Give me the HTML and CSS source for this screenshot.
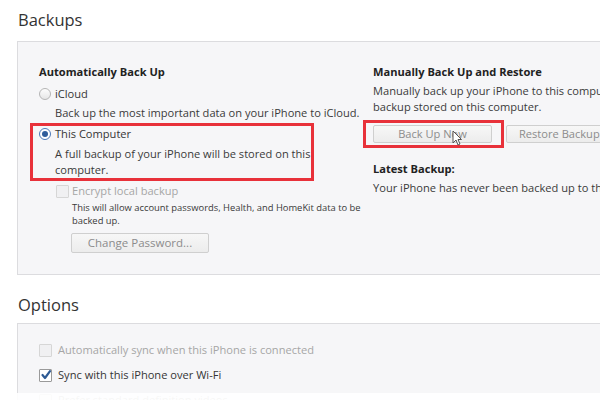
FILE: index.html
```html
<!DOCTYPE html>
<html>
<head>
<meta charset="utf-8">
<link rel="stylesheet" href="styles.css">
</head>
<body>
<div class="page">
  <h2 class="heading">Backups</h2>
  <div class="panel backups">
    <div class="col left">
      <div class="title">Automatically Back Up</div>
      <div class="opt">
        <span class="radio"></span><span>iCloud</span>
      </div>
      <div class="desc indent">Back up the most important data on your iPhone to iCloud.</div>
      <div class="redbox computer">
        <div class="opt">
          <span class="radio on"></span><span>This Computer</span>
        </div>
        <div class="desc indent">A full backup of your iPhone will be stored on this<br>computer.</div>
      </div>
      <div class="encrypt">
        <div class="opt disabled">
          <span class="check"></span><span>Encrypt local backup</span>
        </div>
        <div class="encrypt-body">
          <div class="small">This will allow account passwords, Health, and HomeKit data to be<br>backed up.</div>
          <div class="btn pw">Change Password...</div>
        </div>
      </div>
    </div>
    <div class="col right">
      <div class="title">Manually Back Up and Restore</div>
      <div class="desc">Manually back up your iPhone to this computer or restore a<br>backup stored on this computer.</div>
      <div class="btnrow">
        <div class="redbox now">
          <div class="btn backup">Back Up Now
            <svg class="cursor" width="10" height="16" viewBox="0 0 10 16"><path d="M1 1 L1 13 L4 10 L6 15 L8 14 L6 9.5 L9.5 9.5 Z" fill="#fff" stroke="#555" stroke-width="1" stroke-linejoin="round"/></svg>
          </div>
        </div>
        <div class="btn restore">Restore Backup</div>
      </div>
      <div class="title latest">Latest Backup:</div>
      <div class="desc">Your iPhone has never been backed up to this computer.</div>
    </div>
  </div>

  <h2 class="heading options-h">Options</h2>
  <div class="panel options">
    <div class="row disabled"><span class="check"></span><span>Automatically sync when this iPhone is connected</span></div>
    <div class="row"><span class="check on"><svg width="12" height="12" viewBox="0 0 12 12"><path d="M2.5 6 L5 9 L10 2.2" fill="none" stroke="#2d5a94" stroke-width="2.2" stroke-linecap="round" stroke-linejoin="round"/></svg></span><span>Sync with this iPhone over Wi-Fi</span></div>
    <div class="row faint"><span class="check"></span><span>Prefer standard definition videos</span></div>
  </div>
</div>
<div class="fade"></div>
</body>
</html>
```
FILE: styles.css
```css
html, body {
  margin: 0;
  padding: 0;
  background: #ffffff;
}
body {
  width: 600px;
  height: 400px;
  overflow: hidden;
  position: relative;
  font-family: "Segoe UI", "Open Sans", "Noto Sans", sans-serif;
  font-size: 11.1px;
  color: #353535;
}
.page {
  padding-left: 17px;
}
.heading {
  margin: 0;
  padding: 10px 0 0 1px;
  font-size: 16.5px;
  font-weight: normal;
  line-height: 20px;
  color: #333;
}
.panel {
  background: #f6f6f8;
  border: 1px solid #dcdcdf;
  border-right: none;
}
.backups {
  margin-top: 11px;
  display: flex;
  padding: 22px 0 0 21px;
  box-sizing: border-box;
  height: 234px;
}
.col.left {
  width: 334px;
  flex: none;
  display: flex;
  flex-direction: column;
}
.col.right {
  flex: 1;
  display: flex;
  flex-direction: column;
  white-space: nowrap;
}
.title {
  font-weight: bold;
  line-height: 16px;
  color: #222;
}
.opt {
  display: flex;
  align-items: center;
  line-height: 16px;
  margin-top: 6px;
}
.desc {
  line-height: 16px;
  margin-top: 3px;
  color: #3a3a3a;
}
.indent {
  padding-left: 16px;
}
.radio {
  width: 10px;
  height: 10px;
  border-radius: 50%;
  border: 1px solid #b5b5b5;
  background: linear-gradient(#fdfdfd, #e6e6e6);
  margin: 0 4px 0 0;
  box-sizing: content-box;
  position: relative;
  flex: none;
}
.radio.on {
  border-color: #4a78b8;
  background: #fff;
}
.radio.on::after {
  content: "";
  position: absolute;
  left: 2px;
  top: 2px;
  width: 6px;
  height: 6px;
  border-radius: 50%;
  background: #2f5d9b;
}
.redbox {
  border: 3px solid #e8313a;
}
.computer {
  margin: 2px 0 0 -9px;
  width: 272px;
  padding: 0 0 0 6px;
}
.computer .opt {
  margin-top: 0;
}
.computer .desc {
  margin-top: 4px;
}
.encrypt {
  padding-left: 17px;
  display: flex;
  flex-direction: column;
  align-items: flex-start;
}
.encrypt .opt {
  margin-top: 2px;
}
.encrypt .opt .check {
  margin-right: 3px;
}
.encrypt-body {
  padding-left: 16px;
  display: flex;
  flex-direction: column;
  align-items: flex-start;
}
.disabled, .faint {
  color: #a6a6a6;
}
.check {
  width: 11px;
  height: 11px;
  border: 1px solid #d6d6d6;
  background: #f0f0f2;
  border-radius: 1px;
  flex: none;
  margin-right: 6px;
  position: relative;
}
.check.on {
  background: #fff;
  border-color: #9a9a9a;
}
.check.on svg {
  position: absolute;
  left: -0.5px;
  top: -0.5px;
}
.small {
  font-size: 9.4px;
  line-height: 13px;
  margin-top: 2px;
  color: #3a3a3a;
  white-space: nowrap;
}
.btn {
  border: 1px solid #cfcfcf;
  background: linear-gradient(#f7f7f7, #ececec);
  color: #8c8c8c;
  text-align: center;
  box-sizing: border-box;
  border-radius: 2px;
  position: relative;
}
.btn.pw {
  width: 138px;
  height: 20px;
  line-height: 18px;
  margin: 6px 0 0 -1px;
  font-size: 11.5px;
}
.btnrow {
  display: flex;
  align-items: flex-start;
  margin-top: 5px;
}
.now {
  margin-left: -10px;
  padding: 2px 9px 2px 7px;
}
.btn.backup, .btn.restore {
  width: 119px;
  height: 18px;
  line-height: 16px;
}
.btn.restore {
  margin: 5px 0 0 2px;
  width: 110px;
  text-align: left;
  padding-left: 12px;
}
.cursor {
  position: absolute;
  left: 78px;
  top: 4px;
}
.latest {
  margin-top: 13px;
}
.options-h {
  padding-top: 20px;
}
.options {
  margin-top: 8px;
  padding: 18px 0 0 21px;
  height: 90px;
  box-sizing: border-box;
}
.row {
  display: flex;
  align-items: center;
  line-height: 16px;
  margin-bottom: 9px;
}
.fade {
  position: absolute;
  left: 0;
  right: 0;
  bottom: 0;
  height: 7px;
  background: rgba(255,255,255,0.9);
}
```
